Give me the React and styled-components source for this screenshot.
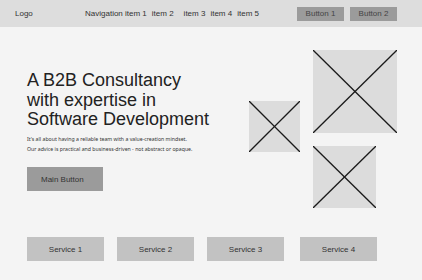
import React from "react";
import styled, { createGlobalStyle } from "styled-components";

const Global = createGlobalStyle`
  html, body { margin: 0; padding: 0; background: #f4f4f4; }
  body { font-family: "Liberation Sans", Arial, sans-serif; color: #333; }
  * { box-sizing: border-box; }
`;

const Page = styled.div`
  width: 422px;
  height: 280px;
  background: #f4f4f4;
  overflow: hidden;
`;

const Header = styled.header`
  height: 27px;
  background: #dddddd;
  display: flex;
  align-items: center;
  padding: 0 25px 0 15px;
  font-size: 8px;
  color: #333;
`;

const Logo = styled.div`
  width: 70px;
`;

const Nav = styled.nav`
  display: flex;
  gap: 5px;
  flex: 1;
`;

const NavItem = styled.span`
  margin-left: ${(p) => (p.$wide ? "5px" : "0")};
`;

const HeaderButtons = styled.div`
  display: flex;
  gap: 6px;
`;

const HeaderButton = styled.div`
  width: 47px;
  height: 14px;
  background: #9b9b9b;
  display: flex;
  align-items: center;
  justify-content: center;
  font-size: 8px;
  color: #444;
`;

const Hero = styled.section`
  display: flex;
  align-items: center;
  padding: 23px 25px 0 27px;
`;

const TextCol = styled.div`
  flex: 1;
  display: flex;
  flex-direction: column;
  align-items: flex-start;
  padding-top: 4px;
`;

const Headline = styled.h1`
  margin: 0;
  font-size: 18px;
  font-weight: 400;
  line-height: 19.8px;
  color: #222;
`;

const Para = styled.p`
  margin: 4px 0 0;
  font-family: "Noto Sans", sans-serif;
  font-size: 5.2px;
  line-height: 10px;
  color: #333;
`;

const MainButton = styled.div`
  margin-top: 13px;
  width: 76px;
  height: 24px;
  background: #9b9b9b;
  display: flex;
  align-items: center;
  padding-left: 14px;
  font-size: 8px;
  color: #333;
`;

const Images = styled.div`
  display: grid;
  grid-template-columns: 51px 84px;
  column-gap: 13px;
  align-items: center;
`;

const ImageStack = styled.div`
  display: flex;
  flex-direction: column;
  gap: 13px;
`;

const Box = styled.div`
  width: ${(p) => p.$w}px;
  height: ${(p) => p.$h}px;
  background: #dcdcdc;
  margin-top: ${(p) => p.$mt || 0}px;
`;

const Placeholder = ({ w, h, mt }) => (
  <Box $w={w} $h={h} $mt={mt}>
    <svg width={w} height={h} viewBox={`0 0 ${w} ${h}`} style={{ display: "block" }}>
      <line x1="0" y1="0" x2={w} y2={h} stroke="#1a1a1a" strokeWidth="1.3" />
      <line x1={w} y1="0" x2="0" y2={h} stroke="#1a1a1a" strokeWidth="1.3" />
    </svg>
  </Box>
);

const Services = styled.section`
  display: flex;
  gap: 13px;
  padding: 29px 0 0 27px;
`;

const Service = styled.div`
  width: 77px;
  height: 24px;
  background: #c2c2c2;
  display: flex;
  align-items: center;
  justify-content: center;
  font-size: 8px;
  color: #333;
  margin-left: ${(p) => p.$extra || 0}px;
`;

export default function App() {
  return (
    <Page>
      <Global />
      <Header>
        <Logo>Logo</Logo>
        <Nav>
          <NavItem>Navigation item 1</NavItem>
          <NavItem>item 2</NavItem>
          <NavItem $wide>item 3</NavItem>
          <NavItem>item 4</NavItem>
          <NavItem>item 5</NavItem>
        </Nav>
        <HeaderButtons>
          <HeaderButton>Button 1</HeaderButton>
          <HeaderButton>Button 2</HeaderButton>
        </HeaderButtons>
      </Header>
      <Hero>
        <TextCol>
          <Headline>
            A B2B Consultancy
            <br />
            with expertise in
            <br />
            Software Development
          </Headline>
          <Para>
            It's all about having a reliable team with a value-creation mindset.
            <br />
            Our advice is practical and business-driven - not abstract or opaque.
          </Para>
          <MainButton>Main Button</MainButton>
        </TextCol>
        <Images>
          <Placeholder w={51} h={51} mt={-5} />
          <ImageStack>
            <Placeholder w={84} h={83} />
            <Placeholder w={63} h={62} />
          </ImageStack>
        </Images>
      </Hero>
      <Services>
        <Service>Service 1</Service>
        <Service>Service 2</Service>
        <Service>Service 3</Service>
        <Service $extra={3}>Service 4</Service>
      </Services>
    </Page>
  );
}
